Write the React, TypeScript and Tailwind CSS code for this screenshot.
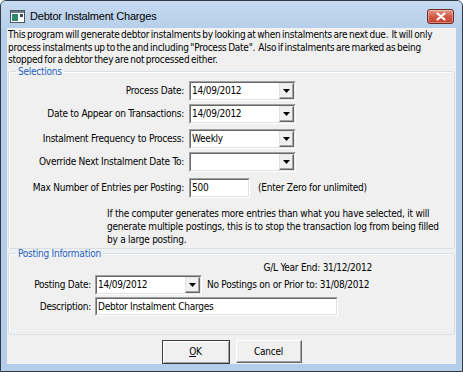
import type { ReactNode } from "react";

const font = { fontFamily: '"DejaVu Sans Condensed", "DejaVu Sans", sans-serif' };

function Sunken({ className, children }: { className: string; children: ReactNode }) {
  return (
    <div className={`border-t border-l border-b border-r border-t-[#a0a0a0] border-l-[#a0a0a0] border-b-white border-r-white ${className}`}>
      <div className="flex h-full items-center border-t border-l border-b border-r border-t-[#696969] border-l-[#696969] border-b-[#e3e3e3] border-r-[#e3e3e3] bg-white">
        {children}
      </div>
    </div>
  );
}

function DropButton() {
  return (
    <div className="flex h-full w-[15px] items-center justify-center border-t border-l border-b border-r border-t-[#e3e3e3] border-l-[#e3e3e3] border-b-[#696969] border-r-[#696969] bg-[#f0f0f0] shadow-[inset_-1px_-1px_0_#a0a0a0]">
      <svg width="7" height="4" viewBox="0 0 7 4">
        <path d="M0 0h7L3.5 4z" fill="#000" />
      </svg>
    </div>
  );
}

function Combo({ value, className }: { value: string; className: string }) {
  return (
    <Sunken className={className}>
      <span className="flex-1 pl-[1px] text-black">{value}</span>
      <DropButton />
    </Sunken>
  );
}

function Row({ label, children, className }: { label: string; children: ReactNode; className: string }) {
  return (
    <div className={`flex items-center ${className}`}>
      <div className="mr-[5px] w-[175px] text-right">{label}</div>
      {children}
    </div>
  );
}

export default function App() {
  return (
    <div
      className="relative flex h-[372px] w-[463px] flex-col overflow-hidden rounded-t-[6px] border border-[#2f3b48] bg-[#b4cde9] text-[10px] leading-[13px] tracking-[-0.25px] text-black"
      style={font}
    >
      {/* Title bar */}
      <div className="flex h-[27px] items-center bg-gradient-to-b from-[#c6daf0] to-[#b7cfea] pt-[3px] pl-[9px] pr-[8px]">
        <svg width="15" height="13" viewBox="0 0 15 13" className="mr-[5px]">
          <rect x="0.5" y="0.5" width="14" height="12" fill="#fff" stroke="#4a5560" />
          <rect x="1" y="1" width="13" height="2" fill="#6a7c8c" />
          <rect x="2" y="4" width="6" height="7" fill="#2e8a6e" />
          <rect x="10" y="4" width="3" height="3" fill="#3a4650" />
        </svg>
        <span
          className="text-[11px] tracking-[-0.2px] text-black"
          style={{ fontFamily: '"Liberation Sans", Arial, sans-serif' }}
        >
          Debtor Instalment Charges
        </span>
        <div className="ml-auto flex h-[15px] w-[27px] items-center justify-center rounded-[3px] border border-[#6b2a22] bg-gradient-to-b from-[#e59a8c] via-[#cf5a48] to-[#c3402f] shadow-[inset_0_0_0_1px_rgba(255,255,255,0.35)]">
          <svg width="10" height="9" viewBox="0 0 10 9">
            <path d="M1.5 1.5l7 6M8.5 1.5l-7 6" stroke="#fff" strokeWidth="2.2" strokeLinecap="round" />
          </svg>
        </div>
      </div>

      {/* Client area */}
      <div className="mx-[6px] flex h-[336px] flex-col bg-[#f0f0f0]">
        <p className="pl-[1px] pt-[1px] leading-[12.5px] [word-spacing:-1px]">
          This program will generate debtor instalments by looking at when instalments are next due.&nbsp; It will only
          process instalments up to the and including "Process Date".&nbsp; Also if instalments are marked as being
          stopped for a debtor they are not processed either.
        </p>

        <fieldset className="mx-[1px] rounded-[3px] border border-[#d5dfe5] pb-[2px] shadow-[inset_1px_1px_0_#fff]">
          <legend className="ml-[7px] px-[2px] leading-[10px] text-[#1e5ebf]">Selections</legend>
          <Row label="Process Date:" className="mt-[4px]">
            <Combo value="14/09/2012" className="h-[20px] w-[107px]" />
          </Row>
          <Row label="Date to Appear on Transactions:" className="mt-[3px]">
            <Combo value="14/09/2012" className="h-[20px] w-[107px]" />
          </Row>
          <Row label="Instalment Frequency to Process:" className="mt-[5px]">
            <Combo value="Weekly" className="h-[20px] w-[107px]" />
          </Row>
          <Row label="Override Next Instalment Date To:" className="mt-[3px]">
            <Combo value="" className="h-[20px] w-[107px]" />
          </Row>
          <Row label="Max Number of Entries per Posting:" className="mt-[6px]">
            <Sunken className="h-[20px] w-[61px]">
              <span className="pl-[1px]">500</span>
            </Sunken>
            <span className="ml-[8px]">(Enter Zero for unlimited)</span>
          </Row>
          <p className="mt-[9px] ml-[98px] w-[336px]">
            If the computer generates more entries than what you have selected, it will generate multiple postings, this
            is to stop the transaction log from being filled by a large posting.
          </p>
        </fieldset>

        <fieldset className="mx-[1px] mt-[-1px] h-[87px] rounded-[3px] border border-[#d5dfe5] shadow-[inset_1px_1px_0_#fff]">
          <legend className="ml-[7px] px-[2px] leading-[12px] text-[#1e5ebf]">Posting Information</legend>
          <div className="mt-[1px] w-[363px] text-right">G/L Year End: 31/12/2012</div>
          <div className="mt-[1px] flex items-center">
            <div className="mr-[4px] w-[82px] text-right">Posting Date:</div>
            <Combo value="14/09/2012" className="h-[20px] w-[107px]" />
            <span className="ml-[5px]">No Postings on or Prior to: 31/08/2012</span>
          </div>
          <div className="mt-[2px] flex items-center">
            <div className="mr-[4px] w-[82px] text-right">Description:</div>
            <Sunken className="h-[19px] w-[243px]">
              <span className="pl-[1px]">Debtor Instalment Charges</span>
            </Sunken>
          </div>
        </fieldset>

        <div className="mt-[5px] flex justify-center gap-[6px]">
          <button className="h-[24px] w-[68px] border border-[#3c3c3c] bg-[#f0f0f0] shadow-[inset_1px_1px_0_#fff,inset_-1px_-1px_0_#a0a0a0]">
            <span className="underline">O</span>K
          </button>
          <button className="h-[23px] w-[66px] border-t border-l border-b border-r border-t-white border-l-white border-b-[#696969] border-r-[#696969] bg-[#f0f0f0] shadow-[inset_-1px_-1px_0_#a0a0a0]">
            Cancel
          </button>
        </div>
      </div>
    </div>
  );
}
